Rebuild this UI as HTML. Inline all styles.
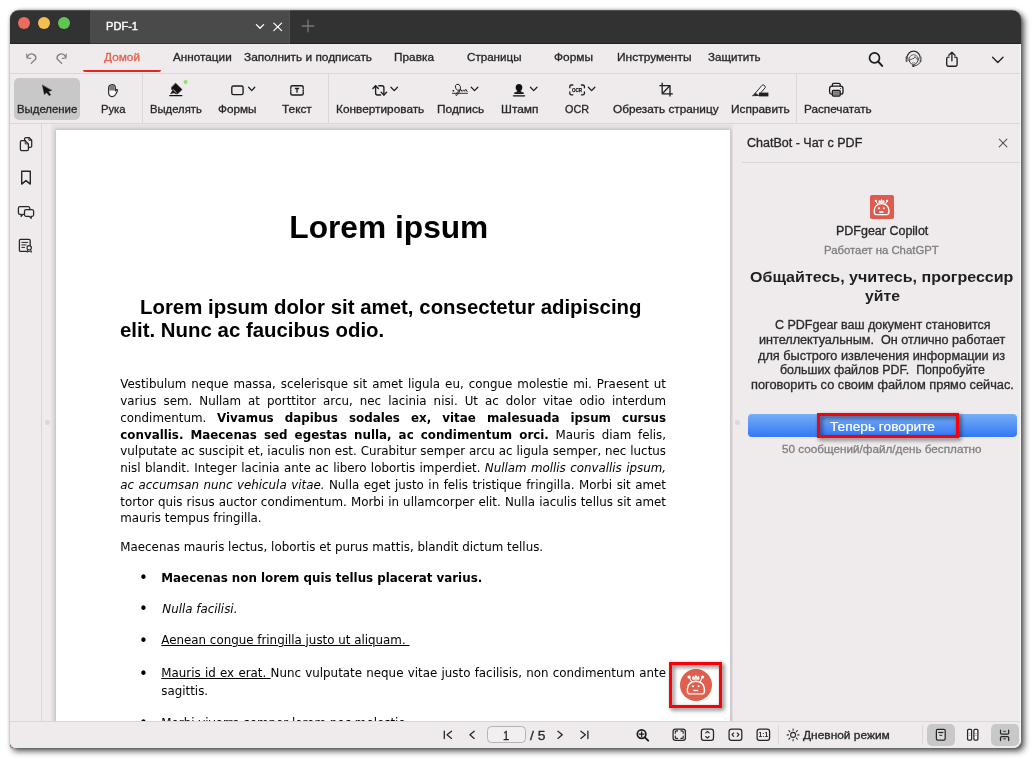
<!DOCTYPE html>
<html lang="ru">
<head>
<meta charset="utf-8">
<title>PDF-1</title>
<style>
html,body{margin:0;padding:0;background:#fff;}
body{width:1032px;height:759px;position:relative;overflow:hidden;font-family:"Liberation Sans",sans-serif;}
#shadow{position:absolute;left:10px;top:10px;width:1011px;height:738px;border-radius:9px 9px 6px 3px;box-shadow:3px 3px 6px rgba(0,0,0,.7),0 0 3px rgba(0,0,0,.3);background:#7d7d7d;}
#win{position:absolute;left:10px;top:10px;width:1011px;height:738px;border-radius:9px 9px 8px 6px;overflow:hidden;background:#efebec;}
#abs{position:absolute;left:-10px;top:-10px;width:1032px;height:759px;will-change:transform;}
#abs div,#abs span.t,#abs svg{position:absolute;}
span.t{white-space:pre;display:block;transform-origin:0 50%;}
.ln{background:#dbd7d8;}
svg{overflow:visible;}
u{text-decoration-thickness:0.8px;}
.doc{font-family:"DejaVu Sans","Liberation Sans",sans-serif;color:#000;}
</style>
</head>
<body>
<div id="shadow"></div>
<div id="win"><div id="abs">
<!-- title bar -->
<div style="left:10px;top:10px;width:1011px;height:34px;background:#323232;"></div>
<div style="left:90px;top:10px;width:199.6px;height:34px;background:#4a4a4a;border-right:1px solid #525252;box-sizing:border-box;"></div>
<div style="left:10px;top:43px;width:1011px;height:1px;background:rgba(0,0,0,.3);"></div>
<div style="left:10px;top:10px;width:1011px;height:1px;background:rgba(255,255,255,.16);"></div>
<div style="left:18px;top:17px;width:12px;height:12px;border-radius:50%;background:#ec6a5e;"></div>
<div style="left:38px;top:17px;width:12px;height:12px;border-radius:50%;background:#f4bf4f;"></div>
<div style="left:58px;top:17px;width:12px;height:12px;border-radius:50%;background:#61c554;"></div>
<!--TITLEICONS-->
<div style="left:1020px;top:44px;width:1px;height:704px;background:rgba(255,255,255,.75);z-index:5;"></div>
<!-- nav row -->
<div class="ln" style="left:10px;top:72.5px;width:1011px;height:1px;"></div>
<div style="left:83px;top:69.5px;width:78px;height:2px;border-radius:0 0 2px 2px;background:#e8251b;"></div>
<!--NAVICONS-->
<!-- toolbar -->
<div style="left:14px;top:78px;width:66px;height:41.5px;border-radius:5px;background:#c9c8c8;"></div>
<div class="ln" style="left:142px;top:74px;width:1px;height:49px;"></div>
<div class="ln" style="left:328px;top:74px;width:1px;height:49px;"></div>
<div class="ln" style="left:796px;top:74px;width:1px;height:49px;"></div>
<div class="ln" style="left:10px;top:123px;width:1011px;height:1px;"></div>
<!--TOOLICONS-->
<!-- sidebar -->
<div class="ln" style="left:41px;top:124px;width:1px;height:597px;"></div>
<!--SIDEICONS-->
<!-- document view -->
<div style="left:51px;top:123.5px;width:682px;height:597.5px;overflow:hidden;background:#e8e4e5;">
  <div style="left:4.8px;top:6.2px;width:674.7px;height:700px;background:#fff;box-shadow:0 0 4px 1px rgba(60,40,45,.24);"></div>
</div>
<div style="left:44.5px;top:419.5px;width:5px;height:5px;border-radius:50%;background:#dcd8d9;"></div>
<div style="left:734.5px;top:419.5px;width:5px;height:5px;border-radius:50%;background:#dcd8d9;"></div>
<div style="left:0;top:124px;width:1032px;height:597px;overflow:hidden;"><div style="left:0;top:-124px;width:1032px;height:759px;">
<span class="t" style='left:289.3px;top:207px;font-size:31.7px;line-height:41px;color:#000;letter-spacing:0.003px;font-weight:700;'>Lorem ipsum</span>
<span class="t" style='left:140.0px;top:294px;font-size:20.4px;line-height:27px;color:#000;word-spacing:0.115px;font-weight:700;'>Lorem ipsum dolor sit amet, consectetur adipiscing</span>
<span class="t" style='left:120.0px;top:317px;font-size:20.4px;line-height:27px;color:#000;word-spacing:0.054px;font-weight:700;'>elit. Nunc ac faucibus odio.</span>
<span class="t" style='left:120.3px;top:377px;font-size:11.87px;line-height:15px;color:#000;word-spacing:1.239px;font-family:"DejaVu Sans", "Liberation Sans", sans-serif;'>Vestibulum neque massa, scelerisque sit amet ligula eu, congue molestie mi. Praesent ut</span>
<span class="t" style='left:120.3px;top:394px;font-size:11.87px;line-height:15px;color:#000;word-spacing:3.248px;font-family:"DejaVu Sans", "Liberation Sans", sans-serif;'>varius sem. Nullam at porttitor arcu, nec lacinia nisi. Ut ac dolor vitae odio interdum</span>
<span class="t" style='left:120.3px;top:411px;font-size:11.87px;line-height:15px;color:#000;word-spacing:7.005px;font-family:"DejaVu Sans", "Liberation Sans", sans-serif;'>condimentum. <b>Vivamus dapibus sodales ex, vitae malesuada ipsum cursus</b></span>
<span class="t" style='left:120.3px;top:428px;font-size:11.87px;line-height:15px;color:#000;word-spacing:2.933px;font-family:"DejaVu Sans", "Liberation Sans", sans-serif;'><b>convallis. Maecenas sed egestas nulla, ac condimentum orci.</b> Mauris diam felis,</span>
<span class="t" style='left:120.3px;top:444px;font-size:11.87px;line-height:15px;color:#000;word-spacing:0.144px;font-family:"DejaVu Sans", "Liberation Sans", sans-serif;'>vulputate ac suscipit et, iaculis non est. Curabitur semper arcu ac ligula semper, nec luctus</span>
<span class="t" style='left:120.3px;top:461px;font-size:11.87px;line-height:15px;color:#000;word-spacing:0.586px;font-family:"DejaVu Sans", "Liberation Sans", sans-serif;'>nisl blandit. Integer lacinia ante ac libero lobortis imperdiet. <i>Nullam mollis convallis ipsum,</i></span>
<span class="t" style='left:120.3px;top:478px;font-size:11.87px;line-height:15px;color:#000;word-spacing:0.719px;font-family:"DejaVu Sans", "Liberation Sans", sans-serif;'><i>ac accumsan nunc vehicula vitae.</i> Nulla eget justo in felis tristique fringilla. Morbi sit amet</span>
<span class="t" style='left:120.3px;top:495px;font-size:11.87px;line-height:15px;color:#000;word-spacing:0.322px;font-family:"DejaVu Sans", "Liberation Sans", sans-serif;'>tortor quis risus auctor condimentum. Morbi in ullamcorper elit. Nulla iaculis tellus sit amet</span>
<span class="t" style='left:120.3px;top:511px;font-size:11.87px;line-height:15px;color:#000;font-family:"DejaVu Sans", "Liberation Sans", sans-serif;'>mauris tempus fringilla.</span>
<span class="t" style='left:120.3px;top:540px;font-size:11.87px;line-height:15px;color:#000;font-family:"DejaVu Sans", "Liberation Sans", sans-serif;'>Maecenas mauris lectus, lobortis et purus mattis, blandit dictum tellus.</span>
<span class="t" style='left:161.3px;top:571px;font-size:11.87px;line-height:15px;color:#000;font-family:"DejaVu Sans", "Liberation Sans", sans-serif;'><b>Maecenas non lorem quis tellus placerat varius.</b></span>
<span class="t" style='left:162.3px;top:602px;font-size:11.87px;line-height:15px;color:#000;font-family:"DejaVu Sans", "Liberation Sans", sans-serif;'><i>Nulla facilisi.</i></span>
<span class="t" style='left:161.3px;top:633px;font-size:11.87px;line-height:15px;color:#000;font-family:"DejaVu Sans", "Liberation Sans", sans-serif;'><u>Aenean congue fringilla justo ut aliquam. </u></span>
<span class="t" style='left:161.3px;top:666px;font-size:11.87px;line-height:15px;color:#000;word-spacing:0.506px;font-family:"DejaVu Sans", "Liberation Sans", sans-serif;'><u>Mauris id ex erat. </u>Nunc vulputate neque vitae justo facilisis, non condimentum ante</span>
<span class="t" style='left:161.3px;top:684px;font-size:11.87px;line-height:15px;color:#000;font-family:"DejaVu Sans", "Liberation Sans", sans-serif;'>sagittis.</span>
<span class="t" style='left:161.3px;top:716px;font-size:11.87px;line-height:15px;color:#000;font-family:"DejaVu Sans", "Liberation Sans", sans-serif;'>Morbi viverra semper lorem nec molestie.</span>
<span class="t" style='left:138.9px;top:568px;font-size:15px;line-height:20px;color:#000;font-family:"DejaVu Sans", "Liberation Sans", sans-serif;'>•</span>
<span class="t" style='left:138.9px;top:599px;font-size:15px;line-height:20px;color:#000;font-family:"DejaVu Sans", "Liberation Sans", sans-serif;'>•</span>
<span class="t" style='left:138.9px;top:631px;font-size:15px;line-height:20px;color:#000;font-family:"DejaVu Sans", "Liberation Sans", sans-serif;'>•</span>
<span class="t" style='left:138.9px;top:664px;font-size:15px;line-height:20px;color:#000;font-family:"DejaVu Sans", "Liberation Sans", sans-serif;'>•</span>
<span class="t" style='left:138.9px;top:713px;font-size:15px;line-height:20px;color:#000;font-family:"DejaVu Sans", "Liberation Sans", sans-serif;'>•</span>
</div></div>
<!-- right panel -->
<div class="ln" style="left:742px;top:162px;width:279px;height:1px;"></div>
<div style="left:870px;top:195px;width:24px;height:24px;border-radius:2px;background:#e05b4f;"></div>
<div style="left:748px;top:414px;width:269px;height:23px;border-radius:4px;background:linear-gradient(#77aef6,#3377f5);"></div>
<div style="left:817px;top:413px;width:135.5px;height:19px;border:3px solid #fb0007;filter:drop-shadow(2px 2px 2px rgba(0,0,0,.6));"></div>
<!--PANELICONS-->
<!-- floating bot -->
<div style="left:680px;top:669px;width:32px;height:32px;border-radius:50%;background:#e0604f;"></div>
<div style="left:669px;top:662px;width:47px;height:40px;border:3px solid #fb0007;filter:drop-shadow(2px 2px 2px rgba(0,0,0,.6));"></div>
<!-- status bar -->
<div style="left:10px;top:721px;width:1011px;height:27px;background:#efebec;"></div>
<div class="ln" style="left:10px;top:721px;width:1011px;height:1px;"></div>
<div style="left:486.5px;top:726px;width:37px;height:14.5px;border:1px solid #b7b1bc;border-radius:4.5px;background:#f2eff0;"></div>
<div class="ln" style="left:777.5px;top:725px;width:1px;height:20px;"></div>
<div class="ln" style="left:921.5px;top:725px;width:1px;height:20px;"></div>
<div style="left:927px;top:724px;width:27.5px;height:21.5px;border-radius:5px;background:#c9c8c8;"></div>
<div style="left:991px;top:724px;width:27.5px;height:21.5px;border-radius:5px;background:#c9c8c8;"></div>
<!--STATUSICONS-->
<svg width="1032" height="759" viewBox="0 0 1032 759" style="left:0;top:0;pointer-events:none" fill="none" stroke-linecap="round" stroke-linejoin="round">
<!-- title bar icons -->
<g stroke="#ffffff" stroke-width="1.3">
  <path d="M256.4 24.6 L260 28.2 L263.6 24.6"/>
  <path d="M273.8 23.1 L281.6 30.6 M281.6 23.1 L273.8 30.6" stroke-width="1.2"/>
</g>
<path d="M302.2 26 H313.8 M308 20.2 V31.8" stroke="#787878" stroke-width="1.3"/>
<!-- undo / redo -->
<g stroke="#7c7c7c" stroke-width="1.25">
  <path d="M31.2 63.4 L35.9 58.7 A4.3 4.3 0 0 0 28.4 55.4 L27.3 57.2"/>
  <path d="M26.8 54.2 L27 58 L30.7 58.3"/>
  <path d="M61.7 63.4 L57 58.7 A4.3 4.3 0 0 1 64.5 55.4 L65.6 57.2"/>
  <path d="M66.1 54.2 L65.9 58 L62.2 58.3"/>
</g>
<!-- nav right icons -->
<g stroke="#1c1c1c">
  <circle cx="874.5" cy="57.9" r="5" stroke-width="1.7"/>
  <path d="M878.3 61.8 L882.2 65.9" stroke-width="2"/>
  <!-- headset -->
  <g stroke="#2e2e2e" stroke-width="1">
    <path d="M906.9 58.2 A6.7 7 0 0 1 920.3 58.2" stroke-width="1.2"/>
    <path d="M906.6 57.2 V61" stroke-width="1.9" stroke="#555"/>
    <path d="M920.7 57.2 V61" stroke-width="1.9" stroke="#777"/>
    <path d="M909.3 57.6 A4.6 4.6 0 0 1 917.9 57.6" stroke-width="0.8" stroke="#444"/>
    <path d="M909 58.2 Q908.4 63.4 913.6 64.6 Q918.6 63.4 918.2 58.2" stroke-width="1"/>
    <path d="M909 60.4 L912.4 58.8 L914 58.3 L915 56.6 L916.8 58.8 L918.2 59.6" stroke-width="0.75"/>
    <path d="M912.6 62.7 Q913.6 63.4 914.6 62.7" stroke-width="0.7" stroke="#666"/>
    <path d="M920.5 61 Q920 64.8 914.6 65.9" stroke-width="0.9"/>
    <ellipse cx="913.3" cy="66" rx="1.3" ry="0.9" fill="#2e2e2e" stroke="none"/>
  </g>
  <!-- share -->
  <g stroke="#222" stroke-width="1.35">
    <path d="M949.2 57.1 H948.3 A1.6 1.6 0 0 0 946.7 58.7 V64.6 A1.6 1.6 0 0 0 948.3 66.2 H955.5 A1.6 1.6 0 0 0 957.1 64.6 V58.7 A1.6 1.6 0 0 0 955.5 57.1 H954.6"/>
    <path d="M951.9 60.8 V52.3 M948.8 55.3 L951.9 52.2 L955 55.3"/>
    <path d="M992.6 57.2 L997.8 62.5 L1003 57.2"/>
  </g>
</g>
<!-- toolbar: cursor -->
<path d="M42.4 85.2 L44.4 94.6 L46.5 92.6 L49.3 95.8 L50.7 94.7 L48.3 91.5 L51.6 90.4 Z" fill="#111" stroke="#111" stroke-width="0.4"/>
<!-- hand -->
<g>
  <path d="M108.6 88.4 Q108.5 84.9 112.2 84.6 Q115.4 84.8 115.4 88 L115.4 90.8 L116.5 89.6 Q117.7 89.2 117.4 90.7 L115.8 94.3 Q114.3 96.7 112 96.6 Q108.6 96.4 108.6 92.6 Z" fill="#fff" stroke="#2a2a2a" stroke-width="1.15"/>
  <path d="M109.2 88.3 Q109.2 85.3 112.2 85.2 Q114.8 85.4 114.8 88 V90.4 H109.2 Z" fill="#7a7a7a" stroke="none"/>
</g>
<!-- highlighter -->
<g>
  <path d="M175.7 83.3 L182 89.5 L177.8 93.8 L175.2 93.8 L174.2 92.8 L170.6 93.8 L172.6 90.6 L171.6 89.6 L171.6 87.4 Z" fill="#111" stroke="#111" stroke-width="0.5"/>
  <path d="M173.2 89.6 L176 92.4" stroke="#fff" stroke-width="0.8"/>
  <path d="M169.8 95.6 H181.8" stroke="#111" stroke-width="1.3"/>
  <circle cx="185.6" cy="82.1" r="2" fill="#8ce36d"/>
</g>
<!-- shapes -->
<g stroke="#1c1c1c" stroke-width="1.35">
  <rect x="231.8" y="86" width="11.3" height="8.6" rx="1.6"/>
  <path d="M248.65 87.25 L251.70 90.6 L254.75 87.25" stroke-width="1.25"/>
</g>
<!-- text box -->
<g stroke="#1c1c1c" stroke-width="1.4">
  <path d="M290.8 88.6 V87.4 A1.6 1.6 0 0 1 292.4 85.8 H301.6 A1.6 1.6 0 0 1 303.2 87.4 V88.6 M303.2 92.2 V93.4 A1.6 1.6 0 0 1 301.6 95 H292.4 A1.6 1.6 0 0 1 290.8 93.4 V92.2 M290.8 89.9 V90.9 M303.2 89.9 V90.9"/>
  <path d="M294.9 88.5 H299.1 M297 88.5 V92.8" stroke-width="1.3" stroke-linecap="butt"/>
</g>
<!-- convert -->
<g stroke="#1c1c1c" stroke-width="1.35">
  <path d="M375.6 86 V93 A2 2 0 0 0 377.6 95 H380.6"/>
  <path d="M372.9 88.5 L375.6 85.7 L378.3 88.5"/>
  <path d="M378.8 85.7 H381.9 A2 2 0 0 1 383.9 87.7 V94.9"/>
  <path d="M381.2 92.3 L383.9 95.1 L386.6 92.3"/>
  <path d="M390.95 87.25 L394.20 90.6 L397.45 87.25" stroke-width="1.25"/>
</g>
<!-- signature -->
<g stroke="#1c1c1c" stroke-width="0.95">
  <path d="M452 93.3 H467.9" stroke-width="0.9" stroke-linecap="butt"/>
  <rect x="452.6" y="90" width="1.5" height="1.5" fill="#1c1c1c" stroke="none"/>
  <path d="M459.6 90.2 Q457.4 91 455.8 88.6 Q454.4 85.4 456.8 84.3 Q459.4 83.6 460.4 86.6 Q461 89.6 459 92.4 Q457.6 95 456.6 95.6 Q455.6 95.6 456 94.2 Q456.8 92.4 459.4 90.4 Q460.6 89.4 461 89.6 L462 91.4 L463.5 89.9 L464.5 91.3 L465.8 89.3 L467.2 91.6"/>
  <path d="M471.25 87.25 L474.55 90.6 L477.85 87.25" stroke-width="1.25"/>
</g>
<!-- stamp -->
<g fill="#111">
  <ellipse cx="519" cy="87.4" rx="3.3" ry="3.5"/>
  <path d="M517.7 89.6 Q518 91.2 515.6 92.4 H522.4 Q520 91.2 520.3 89.6 Z"/>
  <rect x="514.3" y="92.2" width="9.4" height="1.9" rx="0.5"/>
  <rect x="512.8" y="95.2" width="12.4" height="1.25" rx="0.6"/>
  <path d="M530.45 87.25 L533.70 90.6 L536.95 87.25" fill="none" stroke="#1c1c1c" stroke-width="1.25"/>
</g>
<!-- OCR -->
<g stroke="#1c1c1c" stroke-width="1.3">
  <path d="M569.8 87.8 V86.6 A1.6 1.6 0 0 1 571.4 85 H572.8 M581.4 85 H582.8 A1.6 1.6 0 0 1 584.4 86.6 V87.8 M584.4 92 V93.2 A1.6 1.6 0 0 1 582.8 94.8 H581.4 M572.8 94.8 H571.4 A1.6 1.6 0 0 1 569.8 93.2 V92"/>
  <path d="M588.35 87.25 L591.60 90.6 L594.85 87.25" stroke-width="1.25"/>
</g>
<text x="577.1" y="91.8" font-family="Liberation Sans, sans-serif" font-size="5.6" font-weight="700" fill="#111" text-anchor="middle" stroke="#111" stroke-width="0.25" textLength="10" lengthAdjust="spacingAndGlyphs">OCR</text>
<!-- crop -->
<g stroke="#1c1c1c" stroke-width="1.3" stroke-linecap="butt">
  <path d="M662.2 82.8 V93.8 H672.8 M659.4 85.6 H670 V96.4 M663.2 92.8 L669.2 86.4"/>
</g>
<!-- redact -->
<g>
  <path d="M762.2 85.2 Q763.2 84.4 764.2 85.3 L765 86.1 Q765.7 87 765 87.9 L758.6 95.4 L754.6 95.4 L755.6 93 Z" fill="#f4f1f2" stroke="#2a2a2a" stroke-width="1"/>
  <path d="M755.6 93 L758.4 95.5 L752.6 95.8 Z" fill="#2a2a2a" stroke="#2a2a2a" stroke-width="0.6"/>
  <rect x="758.9" y="92.6" width="9.5" height="3.8" fill="#222"/>
</g>
<!-- printer -->
<g stroke="#1c1c1c" stroke-width="1.3">
  <path d="M832.4 86 V84.6 A1.3 1.3 0 0 1 833.7 83.3 H838.9 A1.3 1.3 0 0 1 840.2 84.6 V86"/>
  <path d="M832.3 94.2 H831.6 A2.3 2.3 0 0 1 829.6 91.9 V88.4 A2.3 2.3 0 0 1 831.9 86.1 H840.7 A2.3 2.3 0 0 1 843 88.4 V91.9 A2.3 2.3 0 0 1 840.7 94.2 H840.3"/>
  <rect x="832.4" y="90.3" width="7.8" height="5.8" rx="1" fill="#9a9a9a"/>
  <path d="M834 92.3 H838.6 M834 94.2 H838.6" stroke-width="0.7" stroke="#555"/>
  <circle cx="840.6" cy="88.4" r="0.5" fill="#1c1c1c" stroke="none"/>
</g>
<!-- sidebar icons -->
<g stroke="#262626" stroke-width="1.25">
  <!-- pages -->
  <path d="M24.6 140.4 V138.8 A1.3 1.3 0 0 1 25.9 137.5 H28.9 L31.7 140.3 V146 A1.3 1.3 0 0 1 30.4 147.3 H28.8"/>
  <path d="M28.9 137.7 V140.3 H31.5" stroke-width="0.9"/>
  <path d="M21.7 140.7 H25.2 L28.4 143.9 V149.2 A1.3 1.3 0 0 1 27.1 150.5 H21.7 A1.3 1.3 0 0 1 20.4 149.2 V142 A1.3 1.3 0 0 1 21.7 140.7 Z" fill="#efebec"/>
  <path d="M25.2 140.9 V143.9 H28.2" stroke-width="0.9"/>
  <!-- bookmark -->
  <path d="M21.7 171.2 H30.3 V184.1 L26 180.6 L21.7 184.1 Z" stroke-width="1.4"/>
  <!-- comments -->
  <path d="M24.4 214.3 H22.8 L21.2 216.4 V214.3 H20 A1.6 1.6 0 0 1 18.4 212.7 V208.2 A1.6 1.6 0 0 1 20 206.6 H28.2 A1.6 1.6 0 0 1 29.8 208.2 V209.6"/>
  <path d="M26.1 209.7 H32 A1.6 1.6 0 0 1 33.6 211.3 V214.8 A1.6 1.6 0 0 1 32 216.4 H31.2 V218.3 L29.4 216.4 H26.1 A1.6 1.6 0 0 1 24.5 214.8 V211.3 A1.6 1.6 0 0 1 26.1 209.7 Z"/>
  <!-- certificate -->
  <path d="M26.4 251.4 H20.6 A1.2 1.2 0 0 1 19.4 250.2 V240.5 A1.2 1.2 0 0 1 20.6 239.3 H29 A1.2 1.2 0 0 1 30.2 240.5 V245"/>
  <path d="M21.8 242.4 H27.8 M21.8 244.9 H26.2 M21.8 247.4 H24.6" stroke-width="1"/>
  <circle cx="29.2" cy="247.8" r="2.2" stroke-width="1.1"/>
  <path d="M27.8 249.8 L26.9 252.2 L29.2 251.2 L31.5 252.2 L30.6 249.8" stroke-width="1"/>
</g>
<!-- panel close -->
<path d="M999.3 139.2 L1006.9 146.8 M1006.9 139.2 L999.3 146.8" stroke="#555" stroke-width="1.1"/>
<!-- robot logo -->
<g stroke="#fff" stroke-width="1.3" id="bot">
  <path d="M876.4 214.6 A2.1 2.1 0 0 1 874.3 212.5 V210.1 A7.3 6.5 0 0 1 888.9 210.1 V212.5 A2.1 2.1 0 0 1 886.8 214.6 Z"/>
  <path d="M876 201.2 L877.7 204.3 M887 201.2 L885.3 204.3" stroke-width="1"/>
  <circle cx="875.9" cy="200.9" r="1.15" fill="#fff" stroke="none"/>
  <circle cx="887.1" cy="200.9" r="1.15" fill="#fff" stroke="none"/>
  <path d="M878.8 202.4 L879.2 200.4 L880.5 201.4 L881.5 199.4 L882.5 201.4 L883.8 200.4 L884.2 202.4 Z" stroke-width="0.8" fill="#fff"/>
  <circle cx="879" cy="208.3" r="0.95" fill="#fff" stroke="none"/>
  <circle cx="883.8" cy="208.3" r="0.95" fill="#fff" stroke="none"/>
  <rect x="879.4" y="211.2" width="4" height="1.7" fill="#fff" stroke="none"/>
</g>
<!-- floating robot -->
<g stroke="#fff" stroke-width="1.4">
  <path d="M689.8 693.9 A2.4 2.4 0 0 1 687.4 691.5 V688.7 A8.5 7.5 0 0 1 704.4 688.7 V691.5 A2.4 2.4 0 0 1 702 693.9 Z"/>
  <path d="M689.3 677.3 L691.4 681.3 M702.4 677.3 L700.3 681.3" stroke-width="1.1"/>
  <circle cx="689.1" cy="677" r="1.6" fill="#fff" stroke="none"/>
  <circle cx="702.6" cy="677" r="1.6" fill="#fff" stroke="none"/>
  <path d="M692.6 678.8 L693 676.4 L694.6 677.6 L695.8 675.2 L697 677.6 L698.6 676.4 L699 678.8 Z" stroke-width="1" fill="#fff"/>
  <circle cx="693" cy="686.3" r="1.05" fill="#fff" stroke="none"/>
  <circle cx="698.6" cy="686.3" r="1.05" fill="#fff" stroke="none"/>
  <path d="M693.4 690.5 H698.2" stroke-width="1.4" stroke-linecap="butt"/>
</g>
<!-- status bar nav -->
<g stroke="#262626" stroke-width="1.3">
  <path d="M444.3 731.1 V738.5 M451.5 731.2 L447 734.8 L451.5 738.4"/>
  <path d="M474.2 731.2 L469.9 734.8 L474.2 738.4"/>
  <path d="M557.9 731.2 L562.3 734.8 L557.9 738.4"/>
  <path d="M580.9 731.2 L585.4 734.8 L580.9 738.4 M587.9 731.1 V738.5"/>
</g>
<!-- zoom in -->
<g stroke="#1c1c1c">
  <circle cx="641.6" cy="734.1" r="4.3" stroke-width="1.7"/>
  <path d="M644.8 737.3 L648.2 740.7" stroke-width="1.9"/>
  <path d="M639.3 734.1 H643.9 M641.6 731.8 V736.4" stroke-width="1.3"/>
</g>
<!-- view icons -->
<g stroke="#262626" stroke-width="1.25">
  <rect x="673.1" y="729" width="12.3" height="11.3" rx="2.4"/>
  <path d="M675.3 733.2 V731.9 A1 1 0 0 1 676.3 730.9 H677.6 M680.9 730.9 H682.2 A1 1 0 0 1 683.2 731.9 V733.2 M683.2 736.1 V737.4 A1 1 0 0 1 682.2 738.4 H680.9 M677.6 738.4 H676.3 A1 1 0 0 1 675.3 737.4 V736.1" stroke-width="1.15"/>
  <rect x="701.4" y="729" width="12.1" height="11.3" rx="2.4"/>
  <path d="M705.7 732.9 L707.45 731.4 L709.2 732.9 M705.7 736.5 L707.45 738 L709.2 736.5" stroke-width="1.15"/>
  <rect x="729.1" y="729" width="12.7" height="11.3" rx="2.4"/>
  <path d="M733.6 733 L732 734.7 L733.6 736.4 M737.3 733 L738.9 734.7 L737.3 736.4" stroke-width="1.15"/>
  <rect x="757.1" y="729" width="12.5" height="11.3" rx="2.4"/>
</g>
<text x="763.35" y="737.4" font-family="Liberation Sans, sans-serif" font-size="8" font-weight="700" fill="#262626" text-anchor="middle" stroke="none" textLength="9.6" lengthAdjust="spacingAndGlyphs">1:1</text>
<!-- sun -->
<g stroke="#262626" stroke-width="1.1">
  <circle cx="793.1" cy="734.9" r="2.5"/>
  <path d="M793.1 729 V730.2 M793.1 739.6 V740.8 M787.2 734.9 H788.4 M797.8 734.9 H799 M788.9 730.7 L789.8 731.6 M796.4 738.2 L797.3 739.1 M788.9 739.1 L789.8 738.2 M796.4 731.6 L797.3 730.7"/>
</g>
<!-- page layout icons -->
<g stroke="#262626" stroke-width="1.25">
  <rect x="936.4" y="729.4" width="8.8" height="10.6" rx="1.3" fill="#dcdada"/>
  <path d="M938.2 732.5 H943.4" stroke-width="1.3" stroke-linecap="butt"/>
  <path d="M939.4 735.3 H942.2" stroke-width="1" stroke-linecap="butt"/>
  <rect x="967.6" y="729.4" width="4" height="10.6" rx="1" fill="#fff"/>
  <rect x="973.9" y="729.4" width="4" height="10.6" rx="1" fill="#fff"/>
  <path d="M968.6 733.3 H970.6 M968.6 735.4 H970.6 M974.9 733.3 H976.9 M974.9 735.4 H976.9" stroke-width="0.7" stroke="#888" stroke-linecap="butt"/>
  <path d="M1000.5 730 V733 A1.2 1.2 0 0 0 1001.7 734.2 H1007.5 A1.2 1.2 0 0 0 1008.7 733 V730"/>
  <path d="M1000.5 740.6 V737.8 A1.2 1.2 0 0 1 1001.7 736.6 H1007.5 A1.2 1.2 0 0 1 1008.7 737.8 V740.6"/>
  <path d="M1003.2 731.3 H1006 M1003.2 738.8 H1006" stroke-width="0.9" stroke-linecap="butt"/>
</g>
</svg>

<span class="t" style='left:105.6px;top:19px;font-size:11.5px;line-height:15px;color:#ffffff;transform:scaleX(0.9629);-webkit-text-stroke:0.4px #ffffff;'>PDF-1</span>
<span class="t" style='left:104.0px;top:50px;font-size:11px;line-height:14px;color:#e4604e;transform:scaleX(1.0741);-webkit-text-stroke:0.3px #e4604e;'>Домой</span>
<span class="t" style='left:172.7px;top:50px;font-size:11px;line-height:14px;color:#262626;transform:scaleX(1.0676);-webkit-text-stroke:0.3px #262626;'>Аннотации</span>
<span class="t" style='left:244.0px;top:50px;font-size:11px;line-height:14px;color:#262626;transform:scaleX(1.0778);-webkit-text-stroke:0.3px #262626;'>Заполнить и подписать</span>
<span class="t" style='left:394.0px;top:50px;font-size:11px;line-height:14px;color:#262626;transform:scaleX(1.0761);-webkit-text-stroke:0.3px #262626;'>Правка</span>
<span class="t" style='left:466.5px;top:50px;font-size:11px;line-height:14px;color:#262626;transform:scaleX(1.0551);-webkit-text-stroke:0.3px #262626;'>Страницы</span>
<span class="t" style='left:554.0px;top:50px;font-size:11px;line-height:14px;color:#262626;transform:scaleX(1.0810);-webkit-text-stroke:0.3px #262626;'>Формы</span>
<span class="t" style='left:616.5px;top:50px;font-size:11px;line-height:14px;color:#262626;transform:scaleX(1.0861);-webkit-text-stroke:0.3px #262626;'>Инструменты</span>
<span class="t" style='left:707.5px;top:50px;font-size:11px;line-height:14px;color:#262626;transform:scaleX(1.0516);-webkit-text-stroke:0.3px #262626;'>Защитить</span>
<span class="t" style='left:17.0px;top:102px;font-size:11px;line-height:14px;color:#262626;transform:scaleX(1.0344);-webkit-text-stroke:0.3px #262626;'>Выделение</span>
<span class="t" style='left:100.8px;top:102px;font-size:11px;line-height:14px;color:#262626;transform:scaleX(1.0202);-webkit-text-stroke:0.3px #262626;'>Рука</span>
<span class="t" style='left:149.8px;top:102px;font-size:11px;line-height:14px;color:#262626;transform:scaleX(1.0245);-webkit-text-stroke:0.3px #262626;'>Выделять</span>
<span class="t" style='left:217.8px;top:102px;font-size:11px;line-height:14px;color:#262626;transform:scaleX(1.0671);-webkit-text-stroke:0.3px #262626;'>Формы</span>
<span class="t" style='left:282.0px;top:102px;font-size:11px;line-height:14px;color:#262626;transform:scaleX(1.0757);-webkit-text-stroke:0.3px #262626;'>Текст</span>
<span class="t" style='left:335.5px;top:102px;font-size:11px;line-height:14px;color:#262626;transform:scaleX(1.0754);-webkit-text-stroke:0.3px #262626;'>Конвертировать</span>
<span class="t" style='left:436.7px;top:102px;font-size:11px;line-height:14px;color:#262626;transform:scaleX(1.0816);-webkit-text-stroke:0.3px #262626;'>Подпись</span>
<span class="t" style='left:500.6px;top:102px;font-size:11px;line-height:14px;color:#262626;transform:scaleX(1.0797);-webkit-text-stroke:0.3px #262626;'>Штамп</span>
<span class="t" style='left:565.0px;top:102px;font-size:11px;line-height:14px;color:#262626;transform:scaleX(0.9815);-webkit-text-stroke:0.3px #262626;'>OCR</span>
<span class="t" style='left:612.7px;top:102px;font-size:11px;line-height:14px;color:#262626;transform:scaleX(1.0733);-webkit-text-stroke:0.3px #262626;'>Обрезать страницу</span>
<span class="t" style='left:730.8px;top:102px;font-size:11px;line-height:14px;color:#262626;transform:scaleX(1.0799);-webkit-text-stroke:0.3px #262626;'>Исправить</span>
<span class="t" style='left:803.6px;top:102px;font-size:11px;line-height:14px;color:#262626;transform:scaleX(1.0667);-webkit-text-stroke:0.3px #262626;'>Распечатать</span>
<span class="t" style='left:747.2px;top:135px;font-size:12px;line-height:16px;color:#262626;transform:scaleX(1.0424);-webkit-text-stroke:0.3px #262626;'>ChatBot - Чат с PDF</span>
<span class="t" style='left:835.7px;top:223px;font-size:12px;line-height:16px;color:#262626;transform:scaleX(1.0404);-webkit-text-stroke:0.3px #262626;'>PDFgear Copilot</span>
<span class="t" style='left:824.0px;top:243px;font-size:11px;line-height:14px;color:#7d7d7d;transform:scaleX(1.0310);-webkit-text-stroke:0.3px #7d7d7d;'>Работает на ChatGPT</span>
<span class="t" style='left:750.3px;top:267px;font-size:15px;line-height:20px;color:#1f1f1f;transform:scaleX(1.0690);font-weight:700;'>Общайтесь, учитесь, прогрессир</span>
<span class="t" style='left:864.5px;top:286px;font-size:15px;line-height:20px;color:#1f1f1f;transform:scaleX(1.0521);font-weight:700;'>уйте</span>
<span class="t" style='left:774.5px;top:317px;font-size:12px;line-height:16px;color:#2b2b2b;transform:scaleX(1.0420);-webkit-text-stroke:0.3px #2b2b2b;'>С PDFgear ваш документ становится</span>
<span class="t" style='left:758.8px;top:332px;font-size:12px;line-height:16px;color:#2b2b2b;transform:scaleX(1.0524);-webkit-text-stroke:0.3px #2b2b2b;'>интеллектуальным.  Он отлично работает</span>
<span class="t" style='left:758.0px;top:348px;font-size:12px;line-height:16px;color:#2b2b2b;transform:scaleX(1.0597);-webkit-text-stroke:0.3px #2b2b2b;'>для быстрого извлечения информации из</span>
<span class="t" style='left:779.5px;top:362px;font-size:12px;line-height:16px;color:#2b2b2b;transform:scaleX(1.0341);-webkit-text-stroke:0.3px #2b2b2b;'>больших файлов PDF.  Попробуйте</span>
<span class="t" style='left:750.5px;top:377px;font-size:12px;line-height:16px;color:#2b2b2b;transform:scaleX(1.0655);-webkit-text-stroke:0.3px #2b2b2b;'>поговорить со своим файлом прямо сейчас.</span>
<span class="t" style='left:829.5px;top:419px;font-size:12.6px;line-height:16px;color:#ffffff;transform:scaleX(1.0890);-webkit-text-stroke:0.2px #ffffff;'>Теперь говорите</span>
<span class="t" style='left:782.0px;top:442px;font-size:11px;line-height:14px;color:#808080;transform:scaleX(1.0646);-webkit-text-stroke:0.3px #808080;'>50 сообщений/файл/день бесплатно</span>
<span class="t" style='left:502.8px;top:728px;font-size:12.5px;line-height:16px;color:#262626;transform:scaleX(0.8917);-webkit-text-stroke:0.3px #262626;'>1</span>
<span class="t" style='left:530.0px;top:728px;font-size:12.5px;line-height:16px;color:#262626;transform:scaleX(1.1074);-webkit-text-stroke:0.3px #262626;'>/ 5</span>
<span class="t" style='left:803.0px;top:728px;font-size:11px;line-height:14px;color:#262626;transform:scaleX(1.0842);-webkit-text-stroke:0.3px #262626;'>Дневной режим</span>
</div></div>
</body>
</html>
